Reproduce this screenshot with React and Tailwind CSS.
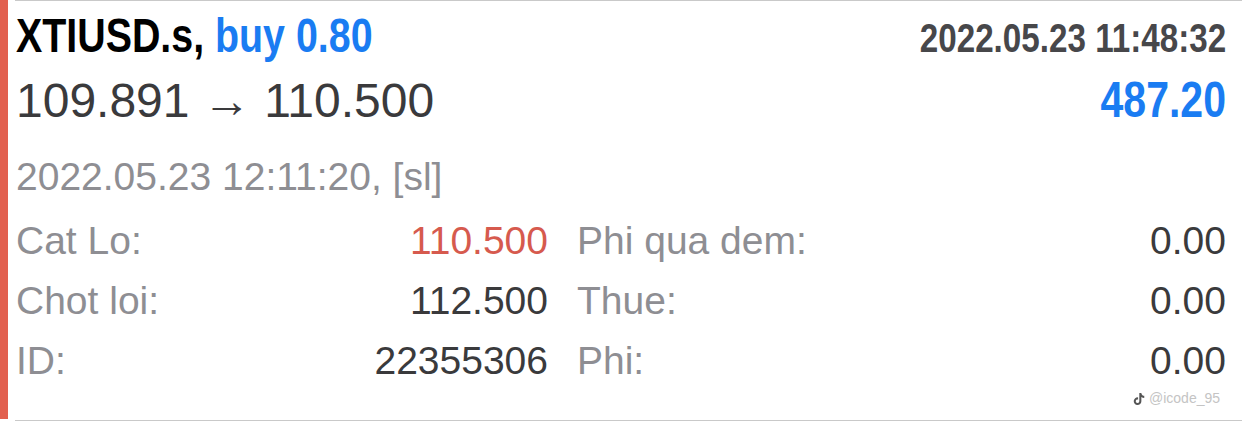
import { FaTiktok } from "react-icons/fa";

const rows = [
  { l1: "Cat Lo:", v1: "110.500", red: true, l2: "Phi qua dem:", v2: "0.00" },
  { l1: "Chot loi:", v1: "112.500", l2: "Thue:", v2: "0.00" },
  { l1: "ID:", v1: "22355306", l2: "Phi:", v2: "0.00" },
];

export default function App() {
  return (
    <div className="relative flex h-[427px] w-[1242px] bg-white font-['Liberation_Sans',Arial,sans-serif]">
      {/* red side marker */}
      <div className="w-[8px] h-[419px] bg-[#e2604f]" />

      <div className="ml-[7px] flex-1 h-[421px] border-y border-[#c9c9c9] pl-[1px] pr-[16px]">
        {/* symbol + open time (condensed bold look) */}
        <div className="flex justify-between h-[70px] items-baseline leading-[70px] font-bold whitespace-nowrap">
          <span className="inline-block origin-left scale-x-[0.82] text-[48px] text-black">
            XTIUSD.s, <span className="text-[#1a7cf2]">buy 0.80</span>
          </span>
          <span className="inline-block origin-right scale-x-[0.83] text-[40px] text-[#47474a]">
            2022.05.23 11:48:32
          </span>
        </div>

        {/* price + profit */}
        <div className="flex justify-between items-baseline h-[58px] leading-[58px] whitespace-nowrap">
          <div className="text-[48px] text-[#3a3a3c]">109.891 → 110.500</div>
          <span className="inline-block origin-right scale-x-[0.82] text-[50px] font-bold text-[#1a7cf2]">
            487.20
          </span>
        </div>

        {/* close time */}
        <div className="mt-[18px] h-[60px] leading-[60px] text-[39px] text-[#8e8e93]">
          2022.05.23 12:11:20, [sl]
        </div>

        {/* details */}
        <div className="mt-[4px] grid grid-cols-[532px_1fr] gap-x-[29px] text-[39px] leading-[60px]">
          {rows.map((r) => (
            <div key={r.l1} className="contents">
              <div className="flex justify-between h-[60px]">
                <span className="text-[#8e8e93]">{r.l1}</span>
                <span className={r.red ? "text-[#d65a4e]" : "text-[#3a3a3c]"}>{r.v1}</span>
              </div>
              <div className="flex justify-between h-[60px]">
                <span className="text-[#8e8e93]">{r.l2}</span>
                <span className="text-[#3a3a3c]">{r.v2}</span>
              </div>
            </div>
          ))}
        </div>
      </div>

      {/* watermark */}
      <div className="absolute left-[1133px] top-[388px] flex items-center gap-[4px] text-[14px] text-[#c4c4c4]">
        <FaTiktok className="w-[12px] h-[12px] text-[#555]" />
        <span>@icode_95</span>
      </div>
    </div>
  );
}
